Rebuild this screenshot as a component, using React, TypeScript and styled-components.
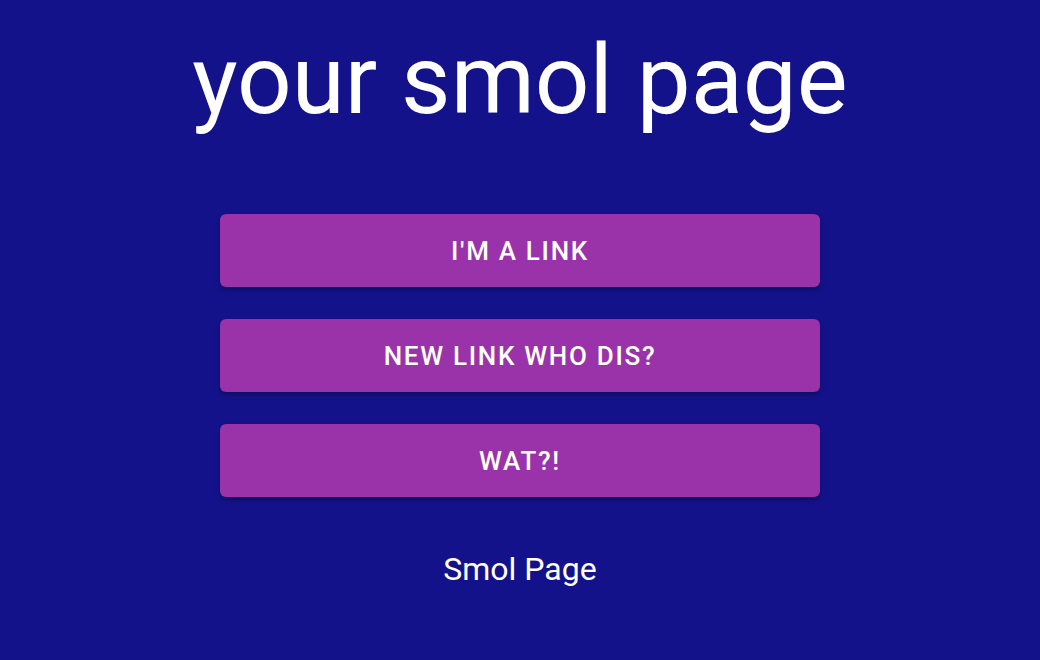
import React from "react";
import styled, { createGlobalStyle } from "styled-components";

const Global = createGlobalStyle`
  html, body { margin: 0; padding: 0; background: #14128b; }
  body { font-family: Roboto, "Liberation Sans", sans-serif; color: #ffffff; }
`;

const Page = styled.main`
  min-height: 660px;
  display: flex;
  flex-direction: column;
  align-items: center;
  background: #14128b;
`;

const Title = styled.h1`
  margin: 14px 0 0;
  font-size: 96px;
  font-weight: 400;
  line-height: 132px;
  color: #ffffff;
`;

const Links = styled.nav`
  margin-top: 68px;
  width: 600px;
  display: flex;
  flex-direction: column;
  gap: 32px;
`;

const LinkButton = styled.a`
  display: flex;
  align-items: center;
  justify-content: center;
  height: 73px;
  border-radius: 6px;
  background: #9a33a9;
  color: #ffffff;
  font-size: 26px;
  font-weight: 500;
  letter-spacing: 1.7px;
  text-transform: uppercase;
  text-decoration: none;
  box-shadow: 0 3px 5px rgba(0, 0, 0, 0.3);
`;

const Footer = styled.p`
  margin: 52px 0 0;
  font-size: 32px;
  line-height: 40px;
  color: #ffffff;
`;

export default function App() {
  return (
    <>
      <Global />
      <Page>
        <Title>your smol page</Title>
        <Links>
          <LinkButton href="#">I'm a link</LinkButton>
          <LinkButton href="#">New link who dis?</LinkButton>
          <LinkButton href="#">wat?!</LinkButton>
        </Links>
        <Footer>Smol Page</Footer>
      </Page>
    </>
  );
}
